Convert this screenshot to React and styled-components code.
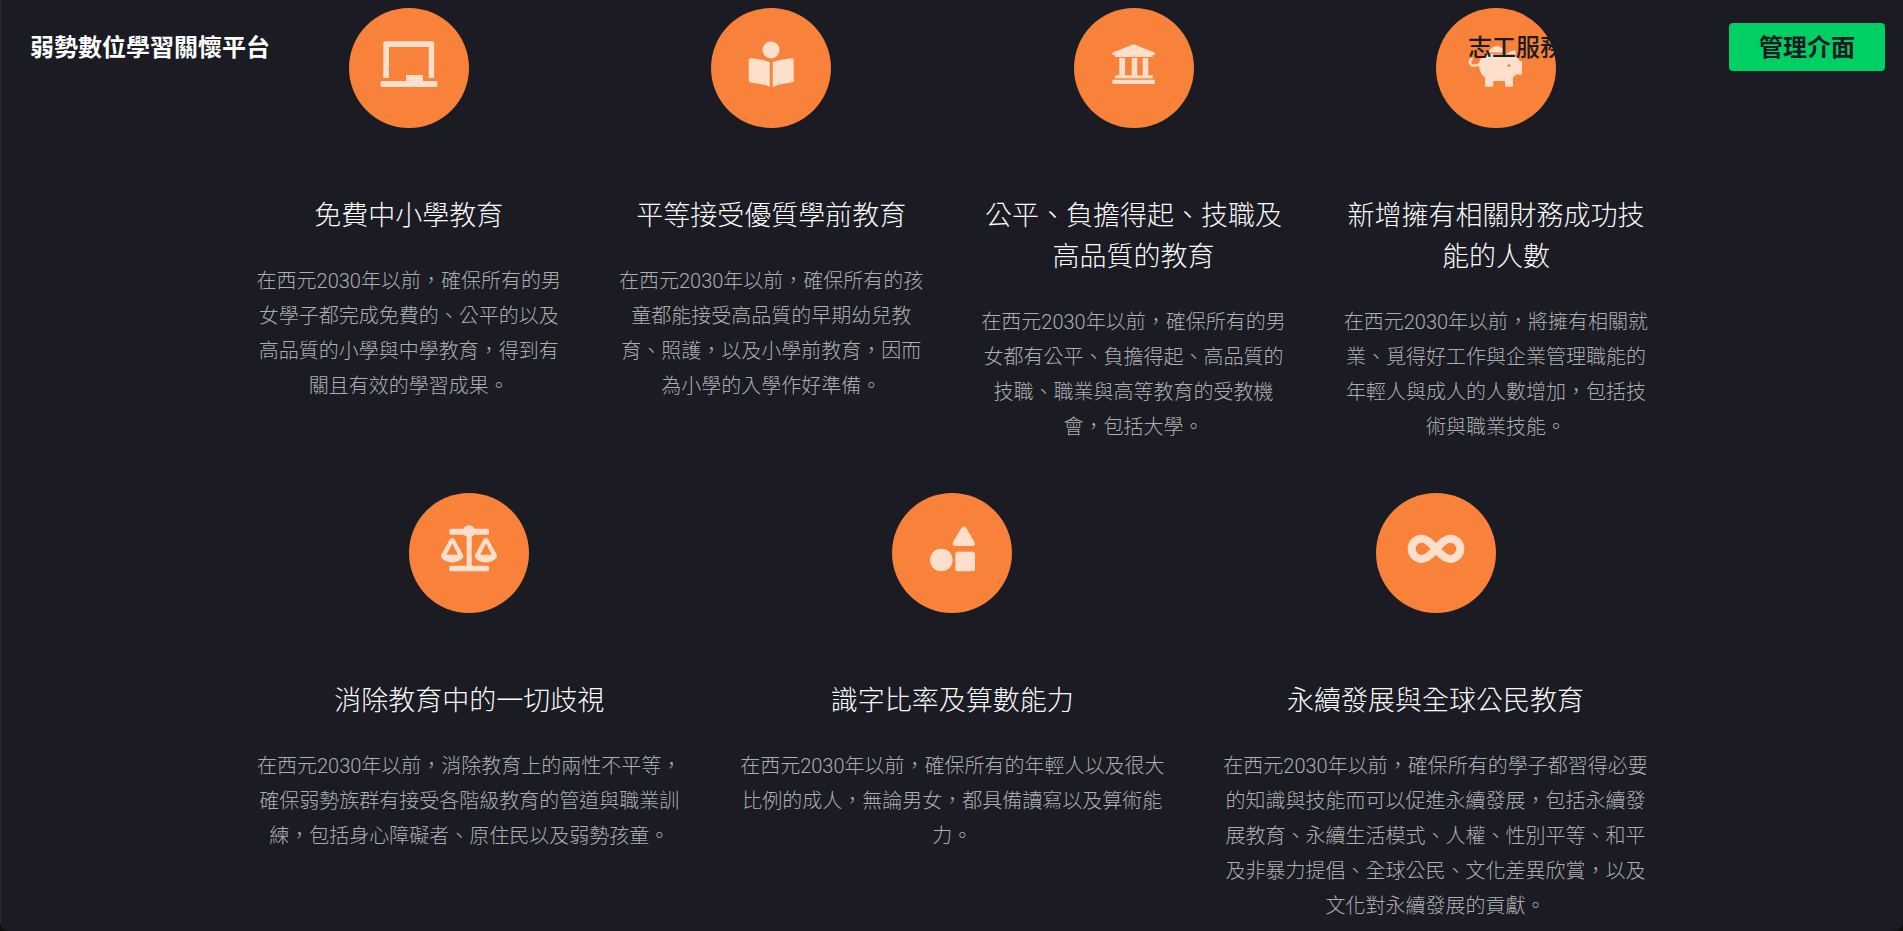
import React from "react";
import styled, { createGlobalStyle } from "styled-components";

const GlobalStyle = createGlobalStyle`
  html, body { margin: 0; padding: 0; background: #0f0f0c; }
  body { font-family: "Liberation Sans", "Noto Sans CJK TC", sans-serif; overflow: hidden; }
`;

const Page = styled.div`
  position: relative;
  height: 931px;
  box-sizing: border-box;
  overflow: hidden;
  background: #1a1b23;
  border-left: 1px solid #2b2c33;
  border-radius: 0 0 10px 10px;
`;

const Nav = styled.nav`
  position: absolute;
  top: 23px;
  left: 29px;
  right: 18px;
  height: 48px;
  display: flex;
  align-items: center;
  font-size: 24px;
  font-weight: 700;
  line-height: 32px;
`;

const Brand = styled.div`
  color: #fff;
  margin-right: auto;
  padding-top: 1px;
`;

const NavLink = styled.div`
  color: #1a1b23;
  margin-right: 165px;
  font-weight: 500;
  padding-top: 1px;
`;

const AdminButton = styled.button`
  width: 156px;
  height: 48px;
  border: 0;
  border-radius: 4px;
  background: #00cf63;
  color: #1a1b23;
  font: inherit;
  padding: 1px 0 0;
`;

const Content = styled.main`
  width: 1393.5px;
  margin-left: 254.6px;
  padding-top: 8px;
  display: flex;
  flex-direction: column;
  gap: 48px;
`;

const Row = styled.section`
  display: grid;
  grid-template-columns: repeat(${(p) => p.$cols}, 1fr);
  column-gap: 56px;
`;

const Card = styled.article`
  display: flex;
  flex-direction: column;
  align-items: center;
  text-align: center;
`;

const Badge = styled.div`
  width: 120px;
  height: 120px;
  border-radius: 50%;
  background: #f9823b;
  margin-bottom: 68px;
  flex: none;
`;

const IconSvg = styled.svg`
  display: block;
  width: 120px;
  height: 120px;
  fill: #fedfcb;
`;

const Title = styled.h2`
  margin: 0 0 27px;
  font-size: 27px;
  line-height: 41px;
  font-weight: 300;
  color: #fafafa;
`;

const Desc = styled.p`
  margin: 0;
  font-family: "Roboto", "Noto Sans CJK TC", sans-serif;
  font-size: 20px;
  line-height: 35px;
  font-weight: 300;
  color: #adaeb2;
`;

const Laptop = () => (
  <IconSvg viewBox="0 0 120 120">
    <path fillRule="evenodd" d="M36.5 33.3H83.2a2 2 0 0 1 2 2V70H79.7V39H40V70H34.3V35.3a2 2 0 0 1 2-2Z" />
    <path d="M57 67H74V73H87a1.4 1.4 0 0 1 1.4 1.4V77.6A1.4 1.4 0 0 1 87 79H33a1.4 1.4 0 0 1-1.4-1.4V74.4A1.4 1.4 0 0 1 33 73H57Z" />
  </IconSvg>
);

const Book = () => (
  <IconSvg viewBox="0 0 120 120">
    <circle cx="60" cy="42" r="8.5" />
    <path d="M39.5 50.2Q50 51 58.8 54V78.7Q50 75.5 39.5 74.5Q37.7 74.3 37.7 72.5V52Q37.7 50 39.5 50.2Z" />
    <path d="M80.9 50.2Q70.5 51 61.7 54V78.7Q70.5 75.5 80.9 74.5Q82.7 74.3 82.7 72.5V52Q82.7 50 80.9 50.2Z" />
  </IconSvg>
);

const Bank = () => (
  <IconSvg viewBox="0 0 120 120">
    <path d="M59.7 36.3L80 44.2Q81 44.6 81 45.6V47H78.7V49H41V47H38.3V45.6Q38.3 44.6 39.3 44.2Z" />
    <rect x="45.3" y="50" width="5.8" height="17.5" />
    <rect x="57.7" y="50" width="5.6" height="17.5" />
    <rect x="68.7" y="50" width="5.6" height="17.5" />
    <rect x="41" y="67.3" width="37.7" height="3" />
    <rect x="38.3" y="71.7" width="42.7" height="4.3" rx="1.2" />
  </IconSvg>
);

const Piggy = () => (
  <IconSvg viewBox="0 0 120 120">
    <path d="M52.8 44.5A8.2 8.2 0 0 1 68.8 44.5Z" />
    <path d="M49 69.5Q43 65 43 57.5Q43 46 57 46H70Q74 43 79.5 42.2V48.5Q82.5 50.5 83.5 53H86V66.5H80.5Q79 68 77 69.5V77.7A1 1 0 0 1 76 78.7H70A1 1 0 0 1 69 77.7V73H57.3V77.7A1 1 0 0 1 56.3 78.7H50A1 1 0 0 1 49 77.7Z" />
    <path d="M36.8 50.5A3.5 3.5 0 0 0 38 57.5Q41 57.8 44 56" fill="none" stroke="#fedfcb" strokeWidth="2.4" />
    <circle cx="73" cy="57.7" r="1.4" fill="#f9823b" />
  </IconSvg>
);

const Scales = () => (
  <IconSvg viewBox="0 0 120 120">
    <rect x="40.3" y="35.7" width="39.7" height="6" rx="1.5" />
    <circle cx="60" cy="38.3" r="6" />
    <rect x="57.7" y="38" width="5" height="36" />
    <rect x="40.3" y="72.7" width="39.7" height="5.6" rx="1.5" />
    <path fillRule="evenodd" d="M43.3 45Q45 45 46 47L54 61.5Q54.8 63 54 64.5Q50 69.4 43.2 69.4Q36.2 69.4 32.4 64.5Q31.6 63 32.4 61.5L40.5 47Q41.5 45 43.3 45ZM43.3 50.5L37.6 61.7H49Z" />
    <path fillRule="evenodd" d="M77 45Q78.7 45 79.7 47L87.7 61.5Q88.5 63 87.7 64.5Q83.7 69.4 77 69.4Q70 69.4 66.2 64.5Q65.4 63 66.2 61.5L74.2 47Q75.2 45 77 45ZM77 50.5L71.3 61.7H82.8Z" />
  </IconSvg>
);

const Shapes = () => (
  <IconSvg viewBox="0 0 120 120">
    <path d="M69.6 34.7Q71.8 32.4 74 34.7L82.3 48.5Q84.3 53 79.8 53H63.8Q59.5 53 61.3 48.5Z" />
    <circle cx="49.3" cy="67" r="11.3" />
    <rect x="63.3" y="58.7" width="19.7" height="19.6" rx="2.5" />
  </IconSvg>
);

const InfinityIcon = () => (
  <IconSvg viewBox="0 0 120 120">
    <path
      d="M60 55.85C55 50 50 45.7 45.8 45.7A10.15 10.15 0 0 0 45.8 66C50 66 55 61.7 60 55.85C65 50 70 45.7 74.2 45.7A10.15 10.15 0 0 1 74.2 66C70 66 65 61.7 60 55.85Z"
      fill="none"
      stroke="#fedfcb"
      strokeWidth="8"
    />
  </IconSvg>
);

const rowOne = [
  {
    icon: <Laptop />,
    title: "免費中小學教育",
    desc: "在西元2030年以前\uFF0C確保所有的男女學子都完成免費的、公平的以及高品質的小學與中學教育\uFF0C得到有關且有效的學習成果。",
  },
  {
    icon: <Book />,
    title: "平等接受優質學前教育",
    desc: "在西元2030年以前\uFF0C確保所有的孩童都能接受高品質的早期幼兒教育、照護\uFF0C以及小學前教育\uFF0C因而為小學的入學作好準備。",
  },
  {
    icon: <Bank />,
    title: "公平、負擔得起、技職及高品質的教育",
    desc: "在西元2030年以前\uFF0C確保所有的男女都有公平、負擔得起、高品質的技職、職業與高等教育的受教機會\uFF0C包括大學。",
  },
  {
    icon: <Piggy />,
    title: "新增擁有相關財務成功技能的人數",
    desc: "在西元2030年以前\uFF0C將擁有相關就業、覓得好工作與企業管理職能的年輕人與成人的人數增加\uFF0C包括技術與職業技能。",
  },
];

const rowTwo = [
  {
    icon: <Scales />,
    title: "消除教育中的一切歧視",
    desc: "在西元2030年以前\uFF0C消除教育上的兩性不平等\uFF0C確保弱勢族群有接受各階級教育的管道與職業訓練\uFF0C包括身心障礙者、原住民以及弱勢孩童。",
  },
  {
    icon: <Shapes />,
    title: "識字比率及算數能力",
    desc: "在西元2030年以前\uFF0C確保所有的年輕人以及很大比例的成人\uFF0C無論男女\uFF0C都具備讀寫以及算術能力。",
  },
  {
    icon: <InfinityIcon />,
    title: "永續發展與全球公民教育",
    desc: "在西元2030年以前\uFF0C確保所有的學子都習得必要的知識與技能而可以促進永續發展\uFF0C包括永續發展教育、永續生活模式、人權、性別平等、和平及非暴力提倡、全球公民、文化差異欣賞\uFF0C以及文化對永續發展的貢獻。",
  },
];

const Goal = ({ item }) => (
  <Card>
    <Badge>{item.icon}</Badge>
    <Title>{item.title}</Title>
    <Desc>{item.desc}</Desc>
  </Card>
);

export default function App() {
  return (
    <>
      <GlobalStyle />
      <Page>
        <Content>
          <Row $cols={4}>
            {rowOne.map((item) => (
              <Goal key={item.title} item={item} />
            ))}
          </Row>
          <Row $cols={3}>
            {rowTwo.map((item) => (
              <Goal key={item.title} item={item} />
            ))}
          </Row>
        </Content>
        <Nav>
          <Brand>弱勢數位學習關懷平台</Brand>
          <NavLink>志工服務</NavLink>
          <AdminButton>管理介面</AdminButton>
        </Nav>
      </Page>
    </>
  );
}
